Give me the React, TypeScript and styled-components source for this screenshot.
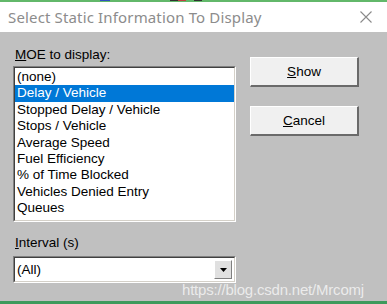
import React from 'react';
import styled, { createGlobalStyle } from 'styled-components';

const GlobalStyle = createGlobalStyle`
    html, body {
        margin: 0;
        padding: 0;
        background: #c0c0c0;
    }
    body {
        width: 387px;
        height: 304px;
        overflow: hidden;
    }
`;

// 창 전체
const Window = styled.div`
    position: relative;
    width: 387px;
    height: 304px;
    display: flex;
    flex-direction: column;
    background: #c0c0c0;
    overflow: hidden;
`;

const TopStrip = styled.div`
    height: 2px;
    background: #62b86a;
    display: flex;
`;

const StripBit = styled.div<{ $left: number; $width: number; $color: string }>`
    margin-left: ${p => p.$left}px;
    width: ${p => p.$width}px;
    height: 1px;
    background: ${p => p.$color};
`;

// 타이틀 바
const TitleBar = styled.div`
    height: 30px;
    background: #ffffff;
    display: flex;
    align-items: center;
    padding-left: 8px;
    padding-right: 12px;
`;

const Title = styled.div`
    font-family: 'Noto Sans', 'Liberation Sans', sans-serif;
    font-size: 15px;
    color: #8c8c8c;
    flex-grow: 1;
    letter-spacing: 0.15px;
`;

const Close = styled.div`
    width: 14px;
    height: 14px;
    margin-right: 2px;
    display: flex;
    align-items: center;
    justify-content: center;
`;

const Body = styled.div`
    flex-grow: 1;
    display: flex;
    padding: 15px 0 0 13px;
    font-family: 'Liberation Sans', Arial, sans-serif;
    font-size: 13.5px;
    color: #000;
`;

const LeftCol = styled.div`
    width: 223px;
    display: flex;
    flex-direction: column;
`;

const Label = styled.div`
    height: 15px;
    line-height: 15px;
    padding-left: 2px;
    margin-bottom: 4px;
`;

const Sunken = styled.div`
    border-top: 1px solid #808080;
    border-left: 1px solid #808080;
    border-right: 1px solid #ffffff;
    border-bottom: 1px solid #ffffff;
`;

const SunkenInner = styled.div`
    border-top: 1px solid #404040;
    border-left: 1px solid #404040;
    border-right: 1px solid #d4d0c8;
    border-bottom: 1px solid #d4d0c8;
    background: #ffffff;
`;

const ListBody = styled.div`
    height: 151px;
    padding-top: 1px;
    display: flex;
    flex-direction: column;
`;

const Item = styled.div<{ $selected?: boolean }>`
    height: 16.4px;
    line-height: 16.4px;
    padding-left: 2px;
    background: ${p => (p.$selected ? '#0078d7' : 'transparent')};
    color: ${p => (p.$selected ? '#ffffff' : '#000000')};
    white-space: nowrap;
`;

const IntervalLabel = styled(Label)`
    margin-top: 13px;
    margin-bottom: 6px;
`;

const ComboBody = styled.div`
    height: 23px;
    display: flex;
    align-items: center;
    padding-left: 2px;
`;

const ComboText = styled.div`
    flex-grow: 1;
`;

const DropButton = styled.div`
    width: 16px;
    height: 17px;
    margin-right: 2px;
    background: #e0e0e0;
    border-top: 1px solid #ffffff;
    border-left: 1px solid #ffffff;
    border-right: 1px solid #808080;
    border-bottom: 1px solid #808080;
    display: flex;
    align-items: center;
    justify-content: center;
`;

const RightCol = styled.div`
    margin-left: 14px;
    padding-top: 10px;
    display: flex;
    flex-direction: column;
    gap: 19px;
`;

const Button = styled.div`
    width: 106px;
    height: 27px;
    background: #f0f0f0;
    border-top: 1px solid #ffffff;
    border-left: 1px solid #ffffff;
    border-right: 2px solid #6a6a6a;
    border-bottom: 2px solid #6a6a6a;
    display: flex;
    align-items: center;
    justify-content: center;
    font-size: 13.5px;
`;

const U = styled.span`
    text-decoration: underline;
`;

const BottomStrip = styled.div`
    height: 3px;
    background: #3e9a5c;
`;

// 워터마크
const Watermark = styled.div`
    position: absolute;
    left: 182px;
    top: 281px;
    font-family: 'Liberation Sans', Arial, sans-serif;
    font-size: 15px;
    color: rgba(255, 255, 255, 0.7);
    letter-spacing: -0.2px;
`;

const items = [
    '(none)',
    'Delay / Vehicle',
    'Stopped Delay / Vehicle',
    'Stops / Vehicle',
    'Average Speed',
    'Fuel Efficiency',
    '% of Time Blocked',
    'Vehicles Denied Entry',
    'Queues',
];

const App: React.FC = () => {
    return (
        <Window>
            <GlobalStyle />
            <TopStrip>
                <StripBit $left={100} $width={10} $color="#3050c0" />
                <StripBit $left={60} $width={8} $color="#303030" />
                <StripBit $left={0} $width={8} $color="#c04040" />
                <StripBit $left={8} $width={8} $color="#303030" />
            </TopStrip>
            <TitleBar>
                <Title>Select Static Information To Display</Title>
                <Close>
                    <svg width="12" height="12" viewBox="0 0 12 12">
                        <path d="M0.5 0.5 L11.5 11.5 M11.5 0.5 L0.5 11.5" stroke="#8a8a8a" strokeWidth="1.1" />
                    </svg>
                </Close>
            </TitleBar>
            <Body>
                <LeftCol>
                    <Label><U>M</U>OE to display:</Label>
                    <Sunken>
                        <SunkenInner>
                            <ListBody>
                                {items.map((it, i) => (
                                    <Item key={it} $selected={i === 1}>{it}</Item>
                                ))}
                            </ListBody>
                        </SunkenInner>
                    </Sunken>
                    <IntervalLabel><U>I</U>nterval (s)</IntervalLabel>
                    <Sunken>
                        <SunkenInner>
                            <ComboBody>
                                <ComboText>(All)</ComboText>
                                <DropButton>
                                    <svg width="7" height="4" viewBox="0 0 7 4">
                                        <path d="M0 0 H7 L3.5 4 Z" fill="#000" />
                                    </svg>
                                </DropButton>
                            </ComboBody>
                        </SunkenInner>
                    </Sunken>
                </LeftCol>
                <RightCol>
                    <Button><U>S</U>how</Button>
                    <Button><U>C</U>ancel</Button>
                </RightCol>
            </Body>
            <BottomStrip />
            <Watermark>https://blog.csdn.net/Mrcomj</Watermark>
        </Window>
    );
};

export default App;
